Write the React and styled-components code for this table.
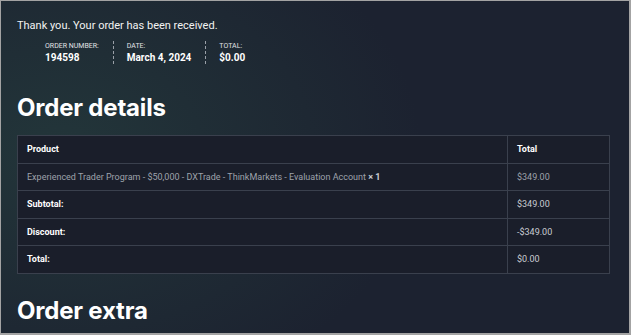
import styled, { createGlobalStyle } from 'styled-components';

const GlobalStyle = createGlobalStyle`
  html, body {
    margin: 0;
    padding: 0;
    background: #9e9e9e;
  }
`;

const Frame = styled.div`
  box-sizing: border-box;
  width: 631px;
  height: 335px;
  padding: 1px 2px 2px 1px;
  background: #a3a3a3;
  overflow: hidden;
`;

const Page = styled.div`
  height: 100%;
  padding: 18px 20px 0 16px;
  box-sizing: border-box;
  overflow: hidden;
  color: #ffffff;
  font-family: Roboto, 'Liberation Sans', sans-serif;
  background:
    radial-gradient(ellipse 360px 260px at 60px 150px, rgba(40, 70, 66, 0.55), rgba(40, 70, 66, 0) 100%),
    #1c2230;
`;

const Notice = styled.p`
  margin: 0;
  font-size: 11px;
  line-height: 14px;
  color: #f2f2f2;
`;

const Overview = styled.ul`
  display: flex;
  list-style: none;
  margin: 8px 0 0 0;
  padding: 0 0 0 28px;
`;

const OverviewItem = styled.li`
  display: flex;
  flex-direction: column;
  padding: 0 14px 0 ${(p) => (p.first ? '0' : '13px')};
  border-left: ${(p) => (p.first ? 'none' : '1px dashed #9aa0a8')};
  height: 23px;
  justify-content: center;
`;

const Label = styled.span`
  font-size: 7px;
  line-height: 9px;
  text-transform: uppercase;
  color: #e0e2e6;
`;

const Value = styled.strong`
  font-size: 10px;
  line-height: 13px;
  font-weight: 700;
  color: #ffffff;
`;

const Heading = styled.h2`
  margin: ${(p) => p.mt} 0 0 0;
  font-family: Inter, 'Open Sans', sans-serif;
  font-size: 24px;
  line-height: 28px;
  font-weight: 700;
  letter-spacing: -0.2px;
  color: #ffffff;
`;

const Table = styled.table`
  margin-top: 13px;
  width: 593px;
  border-collapse: collapse;
  background: #1a1e2a;
  font-size: 9px;
`;

const Row = styled.tr`
  height: 27.5px;
`;

const Cell = styled.td`
  padding: 0 9px;
  border: 1px solid #3a404d;
  color: ${(p) => (p.strong ? '#ffffff' : p.muted ? '#c9ccd2' : '#9ea2ab')};
  font-weight: ${(p) => (p.strong ? 700 : 400)};
  width: ${(p) => p.w || 'auto'};
`;

const Qty = styled.b`
  color: #c9ccd2;
`;

const rows = [
  ['Subtotal:', '$349.00'],
  ['Discount:', '-$349.00'],
  ['Total:', '$0.00'],
];

export default function App() {
  return (
    <Frame>
      <GlobalStyle />
      <Page>
        <Notice>Thank you. Your order has been received.</Notice>
        <Overview>
          <OverviewItem first>
            <Label>Order number:</Label>
            <Value>194598</Value>
          </OverviewItem>
          <OverviewItem>
            <Label>Date:</Label>
            <Value>March 4, 2024</Value>
          </OverviewItem>
          <OverviewItem>
            <Label>Total:</Label>
            <Value>$0.00</Value>
          </OverviewItem>
        </Overview>
        <Heading mt="30px">Order details</Heading>
        <Table>
          <tbody>
            <Row>
              <Cell strong>Product</Cell>
              <Cell strong w="83px">Total</Cell>
            </Row>
            <Row>
              <Cell>
                Experienced Trader Program - $50,000 - DXTrade - ThinkMarkets - Evaluation Account{' '}
                <Qty>× 1</Qty>
              </Cell>
              <Cell>$349.00</Cell>
            </Row>
            {rows.map(([k, v]) => (
              <Row key={k}>
                <Cell strong>{k}</Cell>
                <Cell muted>{v}</Cell>
              </Row>
            ))}
          </tbody>
        </Table>
        <Heading mt="23px">Order extra</Heading>
      </Page>
    </Frame>
  );
}
